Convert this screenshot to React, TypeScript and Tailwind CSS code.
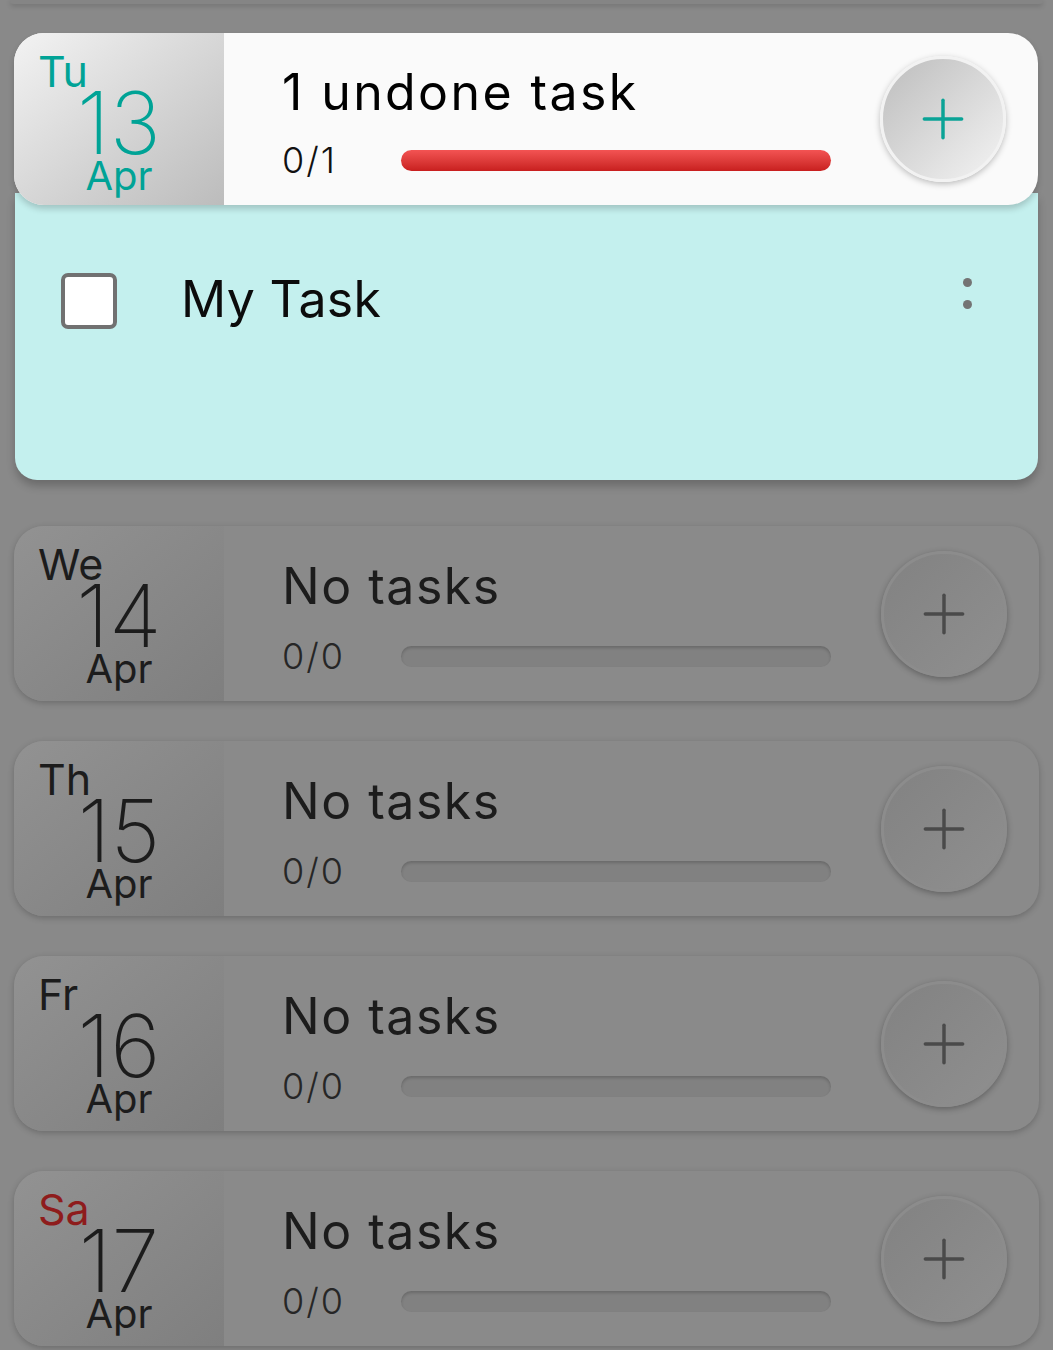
import { Plus } from 'lucide-react';

const font = { fontFamily: 'Inter, "Noto Sans", sans-serif' };

type Day = { wd: string; day: string; sat?: boolean };

const days: Day[] = [
  { wd: 'We', day: '14' },
  { wd: 'Th', day: '15' },
  { wd: 'Fr', day: '16' },
  { wd: 'Sa', day: '17', sat: true },
];

const DateBlock = ({ wd, day, active, sat }: { wd: string; day: string; active?: boolean; sat?: boolean }) => {
  const main = active ? 'text-[#00a396]' : 'text-[#1c1c1c]';
  const wdColor = sat ? 'text-[#8e1c1c]' : main;
  return (
    <div
      className={
        'w-[210px] shrink-0 flex flex-col pt-[18px] ' +
        (active
          ? 'bg-gradient-to-br from-[#f3f3f3] to-[#bcbcbc]'
          : 'bg-gradient-to-br from-[#929292] to-[#7f7f7f]')
      }
    >
      <span className={'pl-[24px] text-[43px] leading-[41px] ' + wdColor}>{wd}</span>
      <span className={'-mt-[5px] text-center text-[86px] leading-[72px] font-extralight ' + main}>{day}</span>
      <span className={'-mt-[3px] text-center text-[40px] leading-[40px] ' + main}>Apr</span>
    </div>
  );
};

const AddButton = ({ active }: { active?: boolean }) => (
  <div
    className={
      'w-[126px] h-[126px] rounded-full flex items-center justify-center border-[3px] ' +
      (active
        ? 'bg-gradient-to-br from-[#bdbdbd] to-[#f4f4f4] border-[#f2f2f2] shadow-[0_2px_6px_rgba(0,0,0,0.25)]'
        : 'bg-gradient-to-br from-[#828282] to-[#8f8f8f] border-[#8c8c8c] shadow-[0_2px_6px_rgba(0,0,0,0.3)]')
    }
  >
    <Plus size={64} strokeWidth={1.3} className={active ? 'text-[#0aa396]' : 'text-[#4a4a4a]'} />
  </div>
);

const DayCard = ({ d }: { d: Day }) => (
  <div className="h-[175px] rounded-[30px] overflow-hidden flex bg-[#8a8a8a] shadow-[0_2px_6px_rgba(0,0,0,0.22)]">
    <DateBlock wd={d.wd} day={d.day} sat={d.sat} />
    <div className="flex-1 flex items-center pr-[32px]">
      <div className="flex-1 self-start pl-[58px] pt-[30px]">
        <div className="text-[50px] leading-[60px] tracking-[1.5px] text-[#1c1c1c]">No tasks</div>
        <div className="flex items-center mt-[18px]">
          <span className="w-[119px] text-[36px] leading-[44px] tracking-[2px] text-[#262626] font-light">0/0</span>
          <div className="w-[430px] h-[21px] rounded-full bg-[#818181] shadow-[inset_0_2px_3px_rgba(0,0,0,0.18)]" />
        </div>
      </div>
      <AddButton />
    </div>
  </div>
);

export default function App() {
  return (
    <div className="min-h-screen bg-[#898989] px-[14px] pb-[10px] overflow-hidden" style={font}>
      <div className="h-[4px] -mx-[4px] rounded-b-[20px] bg-[#858585] shadow-[0_2px_5px_rgba(0,0,0,0.18)]" />
      <div className="mt-[29px] mr-[1px]">
        <div className="relative z-10 h-[172px] rounded-[30px] overflow-hidden flex bg-[#fafafa] shadow-[0_4px_6px_rgba(0,0,0,0.18)]">
          <DateBlock wd="Tu" day="13" active />
          <div className="flex-1 flex items-center pr-[32px]">
            <div className="flex-1 self-start pl-[58px] pt-[29px]">
              <div className="text-[50px] leading-[60px] tracking-[2.4px] text-black">1 undone task</div>
              <div className="flex items-center mt-[16px]">
                <span className="w-[119px] text-[36px] leading-[44px] tracking-[2px] text-[#111] font-light">0/1</span>
                <div className="w-[430px] h-[21px] rounded-full bg-gradient-to-b from-[#f35353] to-[#c81e1e]" />
              </div>
            </div>
            <AddButton active />
          </div>
        </div>
        <div className="-mt-[12px] ml-[1px] h-[287px] rounded-b-[22px] bg-[#c4f0ee] shadow-[0_6px_8px_rgba(0,0,0,0.22)] flex items-start pt-[80px] pl-[46px] pr-[66px]">
          <div className="w-[56px] h-[56px] rounded-[7px] border-[4px] border-[#717171] bg-white" />
          <span className="ml-[64px] -mt-[4px] text-[50px] leading-[60px] tracking-[0.3px] text-[#0c0c0c] flex-1">My Task</span>
          <div className="flex flex-col gap-[13px] mt-[5px]">
            <span className="w-[9px] h-[9px] rounded-full bg-[#747474]" />
            <span className="w-[9px] h-[9px] rounded-full bg-[#747474]" />
          </div>
        </div>
      </div>
      <div className="mt-[46px] flex flex-col gap-[40px]">
        {days.map((d) => (
          <DayCard key={d.day} d={d} />
        ))}
      </div>
    </div>
  );
}
